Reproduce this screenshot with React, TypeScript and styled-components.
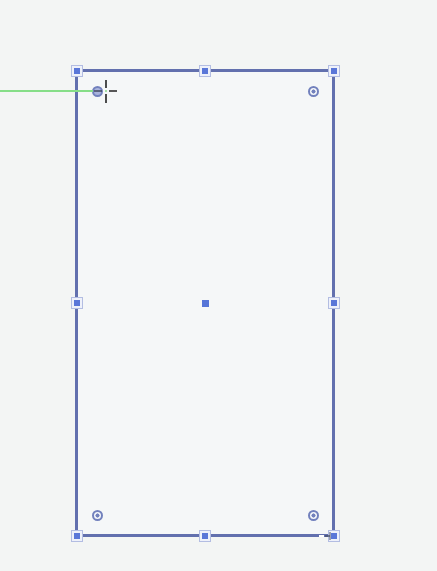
import styled, { createGlobalStyle } from "styled-components";

const GlobalStyle = createGlobalStyle`
  html, body {
    margin: 0;
    padding: 0;
    background: #f3f5f4;
    font-family: "Liberation Sans", Arial, sans-serif;
  }
`;

const Canvas = styled.div`
  position: relative;
  width: 437px;
  height: 571px;
  box-sizing: border-box;
  padding: 69px 0 0 75px;
  overflow: hidden;
  background: #f3f5f4;
`;

// the selected rectangle
const Shape = styled.div`
  position: relative;
  width: 260px;
  height: 468px;
  box-sizing: border-box;
  border: 3px solid #6270ae;
  background: #f5f7f8;
`;

// corner-radius handles and the centre point
const Inner = styled.div`
  height: 100%;
  box-sizing: border-box;
  padding: 14px;
  display: grid;
  grid-template-columns: 10px 1fr 10px;
  grid-template-rows: 10px 1fr 10px;
`;

// resize handles sit on the stroke's centre line
const Frame = styled.div`
  position: absolute;
  inset: -1.5px;
  display: grid;
  grid-template-columns: 0 1fr 0;
  grid-template-rows: 0 1fr 0;
  pointer-events: none;
`;

const Handle = styled.div<{ $col: number; $row: number }>`
  grid-column: ${(p) => p.$col};
  grid-row: ${(p) => p.$row};
  justify-self: center;
  align-self: center;
  width: 6px;
  height: 6px;
  margin: -5px;
  background: #5a77d8;
  border: 2px solid #eef1fa;
  box-shadow: 0 0 0 1px #b3bde2;
`;

const CenterDot = styled.div`
  grid-column: 2;
  grid-row: 2;
  place-self: center;
  width: 7px;
  height: 7px;
  background: #5675d8;
`;

const RadiusHandle = styled.div<{ $col: number; $row: number; $active?: boolean }>`
  grid-column: ${(p) => p.$col};
  grid-row: ${(p) => p.$row};
  width: 11px;
  height: 11px;
  margin: -0.5px;
  box-sizing: border-box;
  border-radius: 50%;
  border: 2px solid #7281bd;
  background: ${(p) =>
    p.$active
      ? "#a9b3dd"
      : "radial-gradient(circle, #7281bd 0 1.8px, #f5f7fa 2.3px)"};
`;

const Guide = styled.div`
  position: absolute;
  z-index: 1;
  left: 0;
  top: 90px;
  width: 93px;
  height: 2px;
  background: #86de88;
`;

const Cursor = styled.svg`
  position: absolute;
  z-index: 2;
  left: 92px;
  top: 78px;
  width: 28px;
  height: 28px;
`;

const Corner = styled.svg`
  position: absolute;
  z-index: 2;
  left: 318px;
  top: 530px;
  width: 20px;
  height: 12px;
`;

const edgeHandles = [
  [1, 1], [2, 1], [3, 1],
  [1, 2], [3, 2],
  [1, 3], [2, 3], [3, 3],
];

export default function App() {
  return (
    <Canvas>
      <GlobalStyle />
      <Guide />
      <Shape>
        <Inner>
          <RadiusHandle $col={1} $row={1} $active />
          <RadiusHandle $col={3} $row={1} />
          <CenterDot />
          <RadiusHandle $col={1} $row={3} />
          <RadiusHandle $col={3} $row={3} />
        </Inner>
        <Frame>
          {edgeHandles.map(([c, r]) => (
            <Handle key={`${c}-${r}`} $col={c} $row={r} />
          ))}
        </Frame>
      </Shape>
      <Cursor viewBox="0 0 28 28">
        <path d="M2 13h8" stroke="#3a4157" strokeWidth="1.4" />
        <path d="M14 2v8M14 16v9M17 13h8" stroke="#222" strokeWidth="1.6" />
        <circle cx="14" cy="13" r="1" fill="#8ad88d" />
      </Cursor>
      <Corner viewBox="0 0 20 12">
        <path d="M1 6h5" stroke="#ffffff" strokeWidth="2" />
        <path d="M7 6h5" stroke="#47506a" strokeWidth="1.4" />
        <path d="M12 2v8" stroke="#47506a" strokeWidth="1" />
      </Corner>
    </Canvas>
  );
}
